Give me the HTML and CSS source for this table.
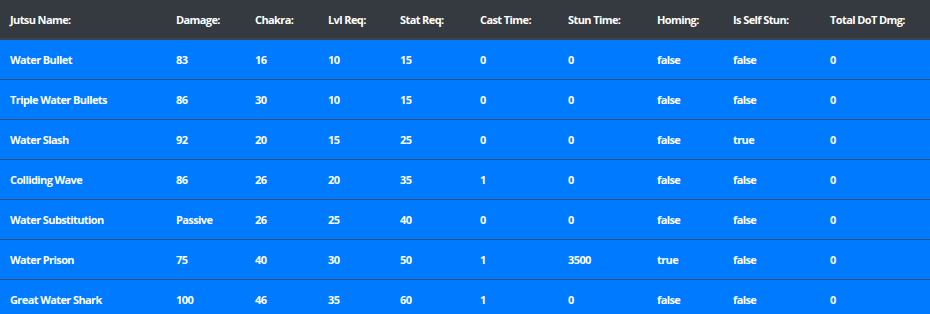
FILE: index.html
```html
<!DOCTYPE html>
<html>
<head>
<meta charset="utf-8">
<link rel="stylesheet" href="styles.css">
</head>
<body>
<table class="jutsu-table">
  <colgroup>
    <col class="c1"><col class="c2"><col class="c3"><col class="c4"><col class="c5"><col class="c6"><col class="c7"><col class="c8"><col class="c9"><col class="c10">
  </colgroup>
  <thead>
    <tr>
      <th>Jutsu Name:</th><th>Damage:</th><th>Chakra:</th><th>Lvl Req:</th><th>Stat Req:</th><th>Cast Time:</th><th>Stun Time:</th><th>Homing:</th><th>Is Self Stun:</th><th>Total DoT Dmg:</th>
    </tr>
  </thead>
  <tbody>
    <tr><td>Water Bullet</td><td>83</td><td>16</td><td>10</td><td>15</td><td>0</td><td>0</td><td>false</td><td>false</td><td>0</td></tr>
    <tr><td>Triple Water Bullets</td><td>86</td><td>30</td><td>10</td><td>15</td><td>0</td><td>0</td><td>false</td><td>false</td><td>0</td></tr>
    <tr><td>Water Slash</td><td>92</td><td>20</td><td>15</td><td>25</td><td>0</td><td>0</td><td>false</td><td>true</td><td>0</td></tr>
    <tr><td>Colliding Wave</td><td>86</td><td>26</td><td>20</td><td>35</td><td>1</td><td>0</td><td>false</td><td>false</td><td>0</td></tr>
    <tr><td>Water Substitution</td><td>Passive</td><td>26</td><td>25</td><td>40</td><td>0</td><td>0</td><td>false</td><td>false</td><td>0</td></tr>
    <tr><td>Water Prison</td><td>75</td><td>40</td><td>30</td><td>50</td><td>1</td><td>3500</td><td>true</td><td>false</td><td>0</td></tr>
    <tr><td>Great Water Shark</td><td>100</td><td>46</td><td>35</td><td>60</td><td>1</td><td>0</td><td>false</td><td>false</td><td>0</td></tr>
  </tbody>
</table>
</body>
</html>
```
FILE: styles.css
```css
html, body {
  margin: 0;
  padding: 0;
  background: #007bff;
}
.jutsu-table {
  width: 930px;
  border-collapse: collapse;
  table-layout: fixed;
  font-family: "Open Sans", sans-serif;
  font-weight: 700;
  font-size: 11px;
  letter-spacing: -0.6px;
  color: #fff;
}
.c1 { width: 166px; }
.c2 { width: 79px; }
.c3 { width: 73px; }
.c4 { width: 72px; }
.c5 { width: 80px; }
.c6 { width: 88px; }
.c7 { width: 89px; }
.c8 { width: 76px; }
.c9 { width: 97px; }
.c10 { width: 110px; }
.jutsu-table th {
  background: #343a40;
  text-align: left;
  height: 39px;
  padding: 1px 0 0 10px;
  box-sizing: border-box;
  border-bottom: 2px solid #3c444c;
  font-weight: 700;
}
.jutsu-table td {
  background: #007bff;
  height: 40px;
  padding: 0 0 0 10px;
  box-sizing: border-box;
  border-top: 1px solid #34507a;
}
.jutsu-table tbody tr:first-child td {
  border-top-color: #007bff;
}
```
